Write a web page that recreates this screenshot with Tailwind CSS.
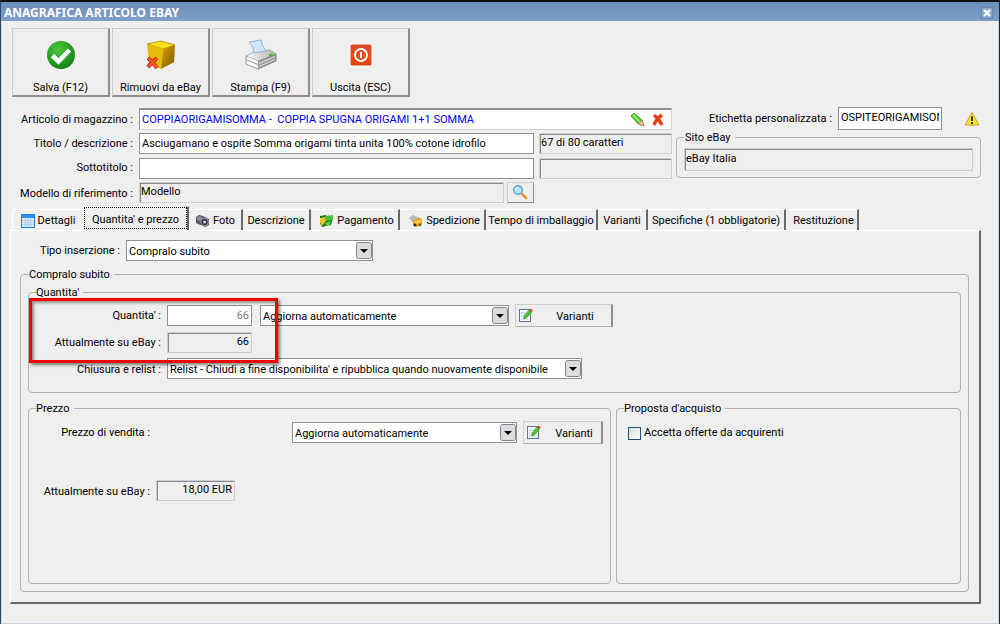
<!DOCTYPE html>
<html lang="it">
<head>
    <meta charset="UTF-8">
    <meta name="viewport" content="width=device-width, initial-scale=1.0">
    <title>Anagrafica articolo eBay</title>
    <script src="https://cdn.jsdelivr.net/npm/@tailwindcss/browser@4"></script>
</head>
<body class="flex min-h-screen flex-col border-t-2 border-r border-l border-t-[#111111] border-r-[#1b2838] border-l-[#2f4a6d] bg-[#efefef] font-['Roboto','Liberation_Sans',sans-serif] text-[11px] leading-[14px] text-black">

    <!-- Title bar -->
    <header class="flex h-[19px] items-center justify-between bg-linear-to-b from-[#6a8fb9] to-[#7f9fc6] pt-[2px] pr-[6px] pl-[3px]">
        <h1 class="font-['Noto_Sans',sans-serif] text-[12px] leading-[16px] font-bold text-white">ANAGRAFICA ARTICOLO EBAY</h1>
        <button type="button" aria-label="Chiudi" class="flex size-[12px] items-center justify-center border border-[#6487b0] bg-[#8aa8cb]">
            <svg class="size-[8px] shrink-0" viewBox="0 0 8 8"><path d="M1 1l6 6M7 1L1 7" stroke="#fff" stroke-width="2.2"/></svg>
        </button>
    </header>

    <div class="flex flex-1 flex-col border-r border-b border-l border-[#ccd6e0] pr-[17px] pb-[19px] pl-2">

        <!-- Toolbar -->
        <div class="flex gap-[2px] pt-[7px] pl-[2px]">
            <button type="button" class="flex h-[69px] w-[98px] flex-col items-center border-t border-r-2 border-b-2 border-l border-[#cdcdcd] border-r-[#8e8e8e] border-b-[#8e8e8e] pt-[10px]">
                <svg class="size-8" viewBox="0 0 32 32">
                    <defs><radialGradient id="ok" cx=".4" cy=".3" r=".8"><stop offset="0" stop-color="#4cc83c"/><stop offset="1" stop-color="#077a0c"/></radialGradient></defs>
                    <circle cx="16" cy="16" r="14" fill="url(#ok)"/>
                    <path d="M7.500 16.500l6 6L24.500 11" fill="none" stroke="#fff" stroke-width="4.600"/>
                </svg>
                <span class="mt-[10px]">Salva (F12)</span>
            </button>
            <button type="button" class="flex h-[69px] w-[98px] flex-col items-center border-t border-r-2 border-b-2 border-l border-[#cdcdcd] border-r-[#8e8e8e] border-b-[#8e8e8e] pt-[10px]">
                <svg class="size-8" viewBox="0 0 32 32">
                    <defs><linearGradient id="box" x1="0" y1="0" x2="1" y2="1"><stop offset="0" stop-color="#d9a900"/><stop offset="1" stop-color="#7c5200"/></linearGradient></defs>
                    <path d="M2 5l14-3 14 4-12 4z" fill="#ffe21c" stroke="#a88100" stroke-width=".8"/>
                    <path d="M2 5l16 5-2 20-12-6z" fill="#e5bd07"/>
                    <path d="M18 10l12-4-1 17-13 7z" fill="url(#box)"/>
                    <path d="M3 19q5 4 9 10M12 19q-5 4-9 9" fill="none" stroke="#a61b00" stroke-width="4"/>
                    <path d="M3 19q5 4 9 10M12 19q-5 4-9 9" fill="none" stroke="#ff5426" stroke-width="2.500"/>
                </svg>
                <span class="mt-[10px]">Rimuovi da eBay</span>
            </button>
            <button type="button" class="flex h-[69px] w-[98px] flex-col items-center border-t border-r-2 border-b-2 border-l border-[#cdcdcd] border-r-[#8e8e8e] border-b-[#8e8e8e] pt-[10px]">
                <svg class="size-8" viewBox="0 0 32 32">
                    <defs><linearGradient id="printer" x1="0" y1="0" x2="1" y2="0"><stop offset="0" stop-color="#fafafa"/><stop offset="1" stop-color="#b4b4b4"/></linearGradient></defs>
                    <path d="M1 17v8l12 5 18-8v-7l-18 7z" fill="#9c9c9c" stroke="#777" stroke-width=".8"/>
                    <path d="M1 17l10-5 14-1 6 4-18 7z" fill="url(#printer)" stroke="#8a8a8a" stroke-width=".6"/>
                    <path d="M1.500 17.500L13 22v7.500L1.500 25z" fill="#f8f8f8"/>
                    <path d="M14 24.500l16-7M14 27.500l16-7" stroke="#e2e2e2" stroke-width="1"/>
                    <path d="M2 21l11 4.500" stroke="#999"/>
                    <path d="M4 3l12-2q1 6 5 11l-12 2Q9 8 4 3z" fill="#cfe5fb" stroke="#7da3cf" stroke-width=".8"/>
                    <ellipse cx="26" cy="16" rx="2.200" ry="1.300" fill="#38c21a"/>
                </svg>
                <span class="mt-[10px]">Stampa (F9)</span>
            </button>
            <button type="button" class="flex h-[69px] w-[98px] flex-col items-center border-t border-r-2 border-b-2 border-l border-[#cdcdcd] border-r-[#8e8e8e] border-b-[#8e8e8e] pt-[10px]">
                <svg class="size-8" viewBox="0 0 32 32">
                    <defs><linearGradient id="off" x1="0" y1="0" x2="0" y2="1"><stop offset="0" stop-color="#d9472a"/><stop offset=".6" stop-color="#ef4b14"/><stop offset="1" stop-color="#d8430f"/></linearGradient></defs>
                    <rect x="5" y="5" width="22" height="22" rx="2" fill="url(#off)" stroke="#fff"/>
                    <circle cx="16" cy="16" r="6" fill="none" stroke="#fff" stroke-width="1.800"/>
                    <path d="M16 13v6" stroke="#fff" stroke-width="2"/>
                </svg>
                <span class="mt-[10px]">Uscita (ESC)</span>
            </button>
        </div>

        <!-- Item data -->
        <div class="flex gap-1 pt-[11px]">
            <div class="grid w-[662px] shrink-0 grid-cols-[123px_1fr] items-center gap-x-[6px] gap-y-[3px]">
                <label for="articolo" class="pt-[2px] text-right">Articolo di magazzino :</label>
                <div class="flex h-[22px] items-center border border-t-2 border-[#cfcfd4] border-t-[#909090] border-l-[#909090] bg-white pr-[5px]">
                    <input id="articolo" type="text" value="COPPIAORIGAMISOMMA -  COPPIA SPUGNA ORIGAMI 1+1 SOMMA" class="min-w-0 flex-1 pl-[2px] text-[#0000ee]">
                    <button type="button" aria-label="Modifica articolo">
                        <svg class="size-4" viewBox="0 0 16 16">
                            <path d="M1 4l3-3 8 7 2 6-6-2z" fill="#58c836" stroke="#2f8a1e" stroke-width=".8"/>
                            <path d="M3 3l7 7" stroke="#a6ee80" stroke-width="1.500"/>
                            <path d="M12 8l2 6-6-2z" fill="#e8c38e" stroke="#9a7748" stroke-width=".6"/>
                        </svg>
                    </button>
                    <button type="button" aria-label="Elimina articolo" class="ml-1">
                        <svg class="size-4" viewBox="0 0 16 16"><path d="M4 3q5 4 8 10M12 3Q6 7 4 13" fill="none" stroke="#e8400c" stroke-width="3.400"/></svg>
                    </button>
                </div>

                <label for="titolo" class="text-right">Titolo / descrizione :</label>
                <div class="flex gap-[5px]">
                    <input id="titolo" type="text" value="Asciugamano e ospite Somma origami tinta unita 100% cotone idrofilo" class="h-[21px] min-w-0 flex-1 border border-[#909090] bg-white pl-[2px]">
                    <input type="text" readonly aria-label="Caratteri titolo" value="67 di 80 caratteri" class="h-[21px] w-[133px] border border-[#cdcdd2] pb-[3px] pl-px shadow-[inset_1px_1px_0_#888888]">
                </div>

                <label for="sottotitolo" class="text-right">Sottotitolo :</label>
                <div class="mt-[1px] flex gap-[5px]">
                    <input id="sottotitolo" type="text" class="h-[21px] min-w-0 flex-1 border border-[#909090] bg-white pl-[2px]">
                    <input type="text" readonly aria-label="Caratteri sottotitolo" class="h-[21px] w-[133px] border border-[#cdcdd2] shadow-[inset_1px_1px_0_#888888]">
                </div>

                <label for="modello" class="pt-[2px] text-right">Modello di riferimento :</label>
                <div class="flex gap-[3px] pr-[138px]">
                    <input id="modello" type="text" readonly value="Modello" class="h-[21px] min-w-0 flex-1 border border-[#cdcdd2] pb-[3px] pl-px shadow-[inset_1px_1px_0_#888888]">
                    <button type="button" aria-label="Cerca modello" class="flex h-[21px] w-[27px] items-center justify-center border border-[#cdcdcd] border-r-[#8e8e8e] border-b-[#8e8e8e] pr-[2px] pb-[2px]">
                        <svg class="size-4" viewBox="0 0 16 16">
                            <path d="M9 9l5 5" stroke="#e8903a" stroke-width="2.600" stroke-linecap="round"/>
                            <circle cx="6" cy="6" r="4.300" fill="#b5e3fa" stroke="#5ba4d6" stroke-width="1.400"/>
                            <path d="M3.500 6a2.500 2.500 0 0 1 2.500-2.500" fill="none" stroke="#fff"/>
                        </svg>
                    </button>
                </div>
            </div>

            <div class="-mt-px min-w-0 flex-1">
                <div class="flex items-center justify-end">
                    <label for="etichetta" class="mr-[6px]">Etichetta personalizzata :</label>
                    <input id="etichetta" type="text" value="OSPITEORIGAMISOMMA" class="h-[23px] w-[104px] border border-[#909090] bg-white px-[2px] pb-[3px]">
                    <svg class="mr-px ml-[22px] h-4 w-[16px]" viewBox="0 0 16 16" role="img" aria-label="Attenzione">
                        <path d="M8 1.500L15 14H1z" fill="#fbe42a" stroke="#c9a227" stroke-linejoin="round"/>
                        <path d="M8 5.500v4.500M8 11v2" stroke="#222" stroke-width="1.800"/>
                    </svg>
                </div>
                <fieldset class="rounded-[4px] border border-[#b0b0b0] px-[7px] pt-1 pb-[6px]">
                    <legend class="px-[1px] pt-[2px] pr-1 leading-[12px]">Sito eBay</legend>
                    <input type="text" readonly aria-label="Sito eBay" value="eBay Italia" class="h-[23px] w-full border border-[#cdcdd2] pb-[3px] pl-px shadow-[inset_1px_1px_0_#888888]">
                </fieldset>
            </div>
        </div>

        <!-- Tabs -->
        <nav role="tablist" class="mt-[3px] flex h-6 items-end pl-[2px]">
            <button type="button" role="tab" class="flex h-[21px] w-[71px] items-center justify-center gap-[3px] rounded-tl-[2px] border-t border-l border-white pt-[2px] whitespace-nowrap">
                <svg class="h-[14px] w-[14px]" viewBox="0 0 14 14"><rect x=".5" y=".5" width="13" height="13" fill="#d6e8fa" stroke="#1f7fd4"/><rect x="1" y="1" width="12" height="3" fill="#2c93ea"/><path d="M2 6.500h10M2 8.500h10M2 10.500h10M4.500 5v8M7 5v8M9.500 5v8" stroke="#aacdf0" stroke-width=".8"/></svg>
                Dettagli
            </button>
            <button type="button" role="tab" aria-selected="true" class="h-6 w-[106px] border-t border-r-2 border-l border-white border-r-[#696969] pb-[1px] whitespace-nowrap">
                <span class="flex h-[22px] items-center justify-center border border-dotted border-black pt-[3px]">Quantita' e prezzo</span>
            </button>
            <button type="button" role="tab" class="flex h-[21px] w-[54px] items-center justify-center gap-[3px] border-t border-r-2 border-t-white border-r-[#696969] pt-[2px] whitespace-nowrap">
                <svg class="h-[14px] w-[15px]" viewBox="0 0 15 14"><path d="M1 3l3-2 4 1 6 3v6l-4 2-9-4z" fill="#55555f"/><path d="M2 3l3-1 3 2v4L2 6z" fill="#8d8d9c"/><circle cx="9.500" cy="8" r="3.800" fill="#33333d" stroke="#a0a0b5"/><circle cx="9.500" cy="8" r="1.600" fill="#c9cdf0"/></svg>
                Foto
            </button>
            <button type="button" role="tab" class="flex h-[21px] w-[68px] items-center justify-center border-t border-r-2 border-t-white border-r-[#696969] pt-[2px] whitespace-nowrap">Descrizione</button>
            <button type="button" role="tab" class="flex h-[21px] w-[89px] items-center justify-center gap-[3px] border-t border-r-2 border-t-white border-r-[#696969] pt-[2px] pl-1 whitespace-nowrap">
                <svg class="h-[14px] w-[15px]" viewBox="0 0 15 14"><path d="M1 2l6-1v3h7l-2 7-5 1-4 1-2-4z" fill="#176f15"/><path d="M6 2l8-1v5l-7 1z" fill="#42c130"/><path d="M1 4l5-1 1 4-4 5-2-4z" fill="#e8c628"/><path d="M6 9l6-2-1 4-4 1z" fill="#53d13e"/></svg>
                Pagamento
            </button>
            <button type="button" role="tab" class="flex h-[21px] w-[86px] items-center justify-center gap-[3px] border-t border-r-2 border-t-white border-r-[#696969] pt-[2px] pl-1 whitespace-nowrap">
                <svg class="h-[14px] w-[15px]" viewBox="0 0 15 14"><path d="M1 4l4-3 6 3-1 5-4 1z" fill="#b9b9bd"/><path d="M5 7l6-4 3 3v4l-5 3-4-2z" fill="#e79f1a"/><path d="M6 8l5-2 3 1-5 3z" fill="#ffd45a"/><circle cx="7" cy="11" r="1.500" fill="#333"/><circle cx="12" cy="11" r="1.300" fill="#7b4b08"/></svg>
                Spedizione
            </button>
            <button type="button" role="tab" class="flex h-[21px] w-[112px] items-center justify-center border-t border-r-2 border-t-white border-r-[#696969] pt-[2px] whitespace-nowrap">Tempo di imballaggio</button>
            <button type="button" role="tab" class="flex h-[21px] w-[50px] items-center justify-center border-t border-r-2 border-t-white border-r-[#696969] pt-[2px] whitespace-nowrap">Varianti</button>
            <button type="button" role="tab" class="flex h-[21px] w-[138px] items-center justify-center border-t border-r-2 border-t-white border-r-[#696969] pt-[2px] whitespace-nowrap">Specifiche (1 obbligatorie)</button>
            <button type="button" role="tab" class="flex h-[21px] w-[73px] items-center justify-center border-t border-r-2 border-t-white border-r-[#696969] pt-[2px] pl-1 whitespace-nowrap">Restituzione</button>
        </nav>

        <!-- Active tab panel -->
        <main role="tabpanel" class="flex flex-1 flex-col border-t border-r-2 border-b-2 border-l border-white border-r-[#696969] border-b-[#696969] pt-[9px] pr-[10px] pb-[10px] pl-[9px]">
            <div class="flex items-center gap-[6px]">
                <label for="tipo" class="w-[100px] text-right">Tipo inserzione :</label>
                <div class="relative w-[247px]">
                    <select id="tipo" class="h-[21px] w-full appearance-none border border-[#909090] bg-white pt-[2px] pl-[2px]">
                        <option>Compralo subito</option>
                    </select>
                    <svg class="pointer-events-none absolute top-[2px] right-[1px] h-[17px] w-[16px]" viewBox="0 0 16 17"><rect x=".5" y=".5" width="15" height="16" rx="2" fill="#dcdcdf" stroke="#85858f"/><path d="M4 7h8l-4 4z"/></svg>
                </div>
            </div>

            <fieldset class="mt-[6px] flex-1 rounded-[4px] border border-[#b0b0b0] px-[7px] pt-1 pb-[7px]">
                <legend class="px-[1px] pt-[2px] pr-1 leading-[12px]">Compralo subito</legend>

                <fieldset class="relative rounded-[4px] border border-[#b0b0b0] pt-[5px] pb-[13px]">
                    <legend class="ml-[7px] pt-[2px] pr-1 leading-[12px]">Quantita'</legend>
                    <div class="grid grid-cols-[132px_1fr] items-center gap-x-[6px] gap-y-[5px]">
                        <label for="quantita" class="pt-[1px] text-right">Quantita' :</label>
                        <div class="flex items-center">
                            <input id="quantita" type="text" value="66" class="h-[21px] w-[85px] border border-[#909090] bg-white pr-[2px] pb-[1px] text-right text-[#7a7a7a]">
                            <div class="relative ml-2 w-[249px]">
                                <select aria-label="Aggiornamento quantita'" class="h-[21px] w-full appearance-none border border-[#909090] bg-white pt-[2px] pl-[2px]">
                                    <option>Aggiorna automaticamente</option>
                                </select>
                                <svg class="pointer-events-none absolute top-[2px] right-[1px] h-[17px] w-[16px]" viewBox="0 0 16 17"><rect x=".5" y=".5" width="15" height="16" rx="2" fill="#dcdcdf" stroke="#85858f"/><path d="M4 7h8l-4 4z"/></svg>
                            </div>
                            <button type="button" class="ml-[6px] flex h-[23px] w-[98px] items-center border border-r-2 border-[#cdcdcd] border-r-[#8e8e8e] border-b-[#b0b0b0] pl-[3px]">
                                <svg class="h-[15px] w-[14px]" viewBox="0 0 14 15"><rect x=".5" y="1.500" width="11" height="12" fill="#f4f8ff" stroke="#5d76a8"/><path d="M2 5h5M2 8h4M2 11h7" stroke="#b9c6df"/><path d="M4.500 11l1-3.500L10 2l2.500 2L8 9.500z" fill="#4cc832" stroke="#2c8b1e" stroke-width=".6"/><path d="M10 2l1.500-1.500L14 2.500 12.500 4z" fill="#e8432a"/></svg>
                                <span class="flex-1 pt-[2px] pl-[6px] text-center">Varianti</span>
                            </button>
                        </div>

                        <label for="su-ebay" class="text-right">Attualmente su eBay :</label>
                        <input id="su-ebay" type="text" readonly value="66" class="h-[21px] w-[85px] border border-[#cdcdd2] pr-[2px] pb-[3px] text-right shadow-[inset_1px_1px_0_#888888]">

                        <label for="chiusura" class="pt-[2px] text-right">Chiusura e relist :</label>
                        <div class="relative w-[415px]">
                            <select id="chiusura" class="h-[21px] w-full appearance-none border border-[#909090] bg-white pt-[2px] pl-[2px]">
                                <option>Relist - Chiudi a fine disponibilita' e ripubblica quando nuovamente disponibile</option>
                            </select>
                            <svg class="pointer-events-none absolute top-[2px] right-[1px] h-[17px] w-[16px]" viewBox="0 0 16 17"><rect x=".5" y=".5" width="15" height="16" rx="2" fill="#dcdcdf" stroke="#85858f"/><path d="M4 7h8l-4 4z"/></svg>
                        </div>
                    </div>
                    <!-- Highlight -->
                    <div class="pointer-events-none absolute -top-px left-0 h-[65px] w-[249px] border-3 border-[#f00000] shadow-[2px_2px_3px_rgba(0,0,0,0.5),inset_2px_2px_3px_rgba(0,0,0,0.4)]"></div>
                </fieldset>

                <div class="mt-2 flex min-h-[183px] gap-[5px]">
                    <fieldset class="w-[583px] rounded-[4px] border border-[#b0b0b0] pt-[6px]">
                        <legend class="ml-[7px] pt-[2px] pr-1 leading-[12px]">Prezzo</legend>
                        <div class="flex items-center">
                            <label for="vendita" class="w-[121px] text-right">Prezzo di vendita :</label>
                            <div class="relative ml-auto w-[225px]">
                                <select id="vendita" class="h-[21px] w-full appearance-none border border-[#909090] bg-white pt-[2px] pl-[2px]">
                                    <option>Aggiorna automaticamente</option>
                                </select>
                                <svg class="pointer-events-none absolute top-[2px] right-[1px] h-[17px] w-[16px]" viewBox="0 0 16 17"><rect x=".5" y=".5" width="15" height="16" rx="2" fill="#dcdcdf" stroke="#85858f"/><path d="M4 7h8l-4 4z"/></svg>
                            </div>
                            <button type="button" class="mr-[7px] ml-[6px] flex h-[23px] w-[80px] items-center border border-r-2 border-[#cdcdcd] border-r-[#8e8e8e] border-b-[#b0b0b0] pl-[3px]">
                                <svg class="h-[15px] w-[14px]" viewBox="0 0 14 15"><rect x=".5" y="1.500" width="11" height="12" fill="#f4f8ff" stroke="#5d76a8"/><path d="M2 5h5M2 8h4M2 11h7" stroke="#b9c6df"/><path d="M4.500 11l1-3.500L10 2l2.500 2L8 9.500z" fill="#4cc832" stroke="#2c8b1e" stroke-width=".6"/><path d="M10 2l1.500-1.500L14 2.500 12.500 4z" fill="#e8432a"/></svg>
                                <span class="flex-1 pt-[2px] pl-[6px] text-center">Varianti</span>
                            </button>
                        </div>
                        <div class="mt-9 flex items-center gap-[6px]">
                            <label for="prezzo-ebay" class="w-[121px] pt-[2px] text-right">Attualmente su eBay :</label>
                            <input id="prezzo-ebay" type="text" readonly value="18,00 EUR" class="h-[21px] w-[79px] border border-[#cdcdd2] pr-[2px] pb-[3px] text-right shadow-[inset_1px_1px_0_#888888]">
                        </div>
                    </fieldset>

                    <fieldset class="min-w-0 flex-1 rounded-[4px] border border-[#b0b0b0] pt-[11px] pl-[11px]">
                        <legend class="-ml-1 pt-[2px] pr-1 leading-[12px]">Proposta d'acquisto</legend>
                        <label class="flex items-center gap-[3px]">
                            <input type="checkbox" class="size-[13px] appearance-none border border-[#1c5180] bg-linear-to-br from-[#dcdcd7] to-white">
                            Accetta offerte da acquirenti
                        </label>
                    </fieldset>
                </div>
            </fieldset>
        </main>
    </div>

</body>
</html>
